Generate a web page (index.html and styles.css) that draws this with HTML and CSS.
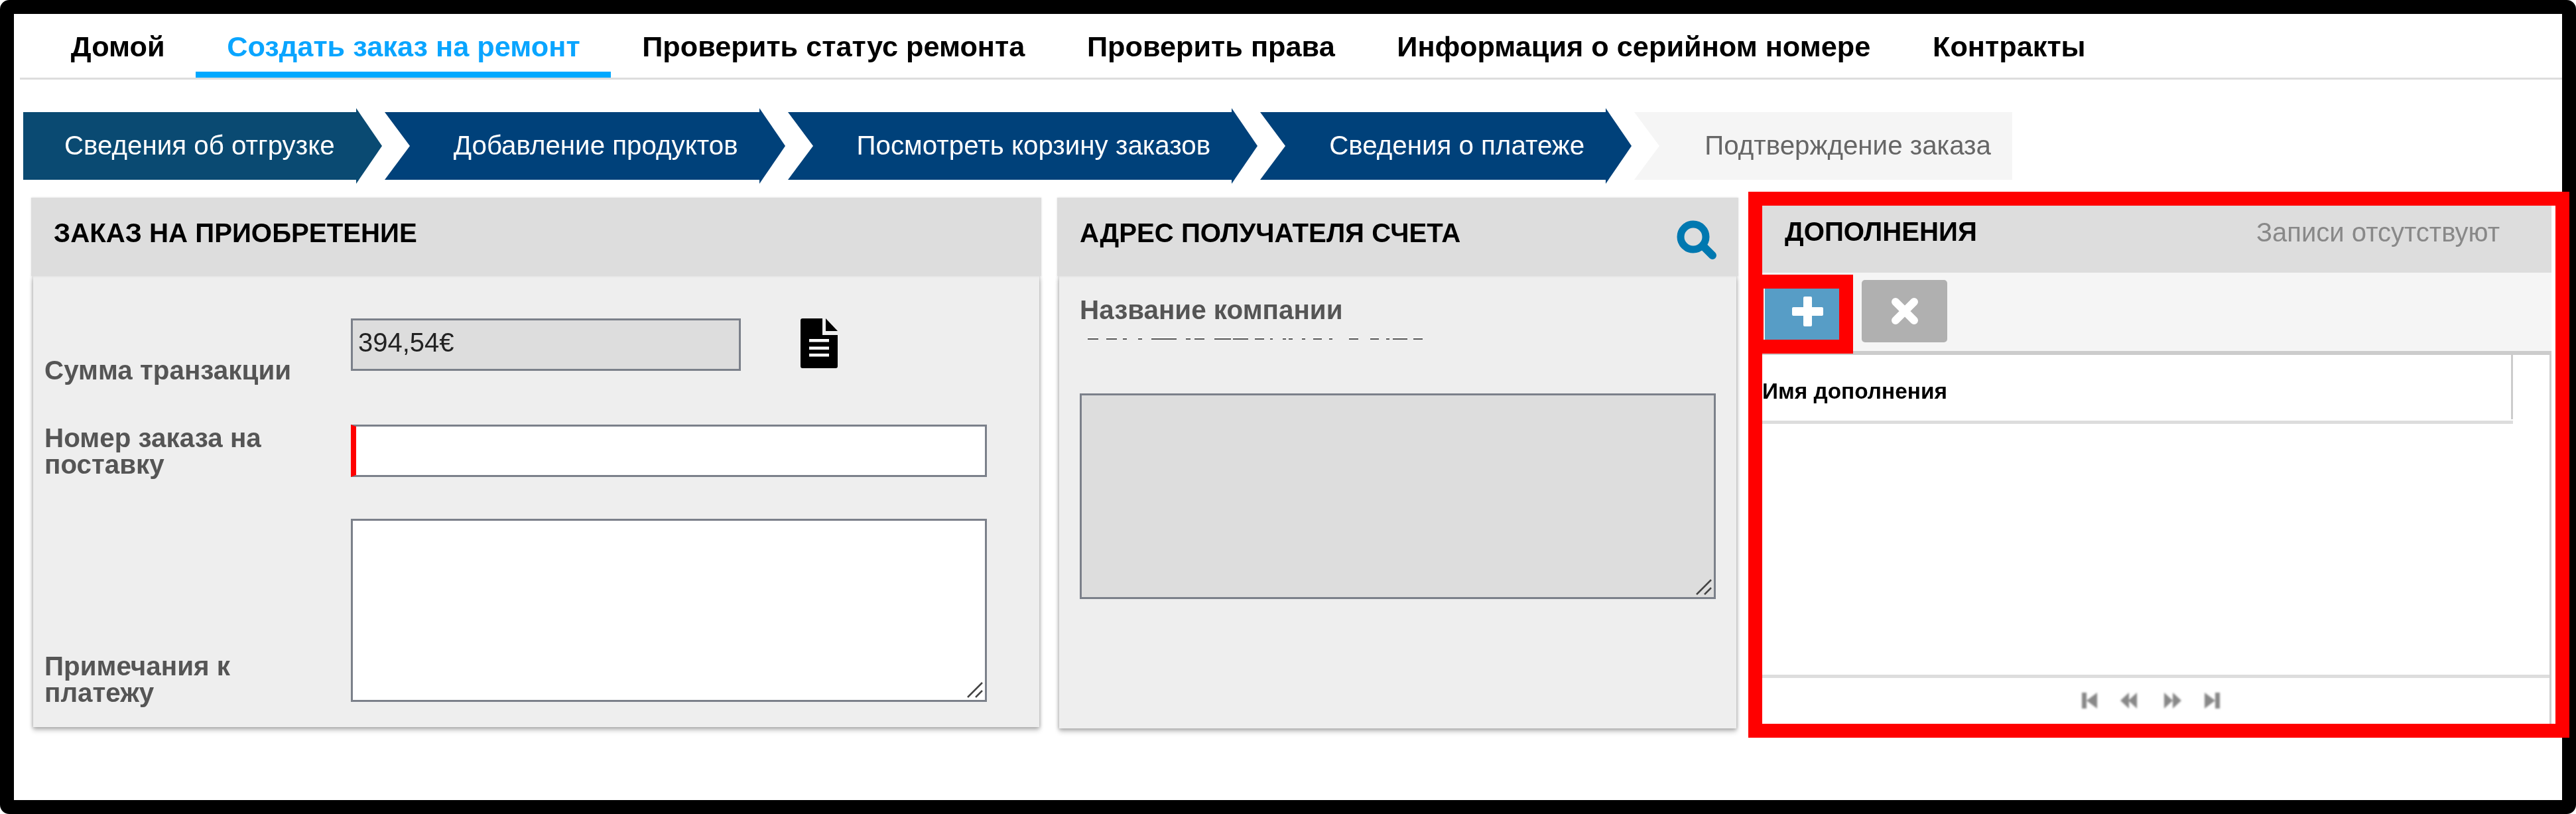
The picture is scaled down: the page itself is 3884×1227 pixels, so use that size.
FILE: index.html
```html
<!DOCTYPE html>
<html lang="ru">
<head>
<meta charset="utf-8">
<title>Создать заказ на ремонт</title>
<link rel="stylesheet" href="styles.css">
</head>
<body>
<div class="frame">
  <nav class="nav">
    <a class="nav-item">Домой</a>
    <a class="nav-item active">Создать заказ на ремонт</a>
    <a class="nav-item">Проверить статус ремонта</a>
    <a class="nav-item">Проверить права</a>
    <a class="nav-item">Информация о серийном номере</a>
    <a class="nav-item">Контракты</a>
  </nav>
  <ol class="steps">
    <li class="step first">Сведения об отгрузке</li>
    <li class="step">Добавление продуктов</li>
    <li class="step">Посмотреть корзину заказов</li>
    <li class="step">Сведения о платеже</li>
    <li class="step pending">Подтверждение заказа</li>
  </ol>
  <div class="panels">
    <section class="panel panel-order">
      <header class="panel-head"><h2 class="panel-title">ЗАКАЗ НА ПРИОБРЕТЕНИЕ</h2></header>
      <div class="panel-body order-body">
        <div class="form-row row-amount">
          <label class="label">Сумма транзакции</label>
          <div class="control with-icon">
            <input class="field amount" type="text" readonly value="394,54€">
            <svg class="doc-icon" viewBox="0 0 56 75" width="56" height="75">
              <path fill="#000" d="M3 0H33V25H56V72a3 3 0 0 1-3 3H3a3 3 0 0 1-3-3V3a3 3 0 0 1 3-3Z"/>
              <path fill="#000" d="M38 0L56 19H38Z"/>
              <path fill="#fff" d="M13 31h30v4.500H13ZM13 42.500h30v4.500H13ZM13 53h30v4.500H13Z"/>
            </svg>
          </div>
        </div>
        <div class="form-row row-po">
          <label class="label">Номер заказа на поставку</label>
          <div class="control"><input class="field po" type="text"></div>
        </div>
        <div class="form-row row-notes">
          <label class="label">Примечания к платежу</label>
          <div class="control notes">
            <textarea class="field area notes-area"></textarea>
            <svg class="grip" viewBox="0 0 24 24" width="24" height="24"><path d="M1 23L23 1M13 23L23 13" stroke="#444" stroke-width="2.500" fill="none"/></svg>
          </div>
        </div>
      </div>
    </section>
    <section class="panel panel-address">
      <header class="panel-head head-search">
        <h2 class="panel-title">АДРЕС ПОЛУЧАТЕЛЯ СЧЕТА</h2>
        <svg class="search-icon" viewBox="0 0 60 60" width="60" height="60">
          <circle cx="25" cy="25" r="19" fill="none" stroke="#0078b0" stroke-width="11"/>
          <path d="M42 41L54 53" stroke="#0078b0" stroke-width="12" stroke-linecap="round"/>
        </svg>
      </header>
      <div class="panel-body address-body">
        <div class="label company">Название компании</div>
        <svg class="masked" viewBox="0 0 530 4" width="530" height="4">
          <path stroke="#fff" stroke-width="2" fill="none" d="M20 1H36M48 1H64M73 1H79M96 1H102M116 1H154M168 1H175M181 1H196M211 1H236M239 1H262M272 1H286M295 1H299M314 1H319M323 1H329M343 1H348M360 1H373M384 1H389M414 1H428M446 1H459M470 1H475M480 1H502M511 1H525"/>
          <path stroke="#555" stroke-width="2" fill="none" d="M20 3H36M48 3H64M73 3H79M96 3H102M116 3H154M168 3H175M181 3H196M211 3H236M239 3H262M272 3H286M295 3H299M314 3H319M323 3H329M343 3H348M360 3H373M384 3H389M414 3H428M446 3H459M470 3H475M480 3H502M511 3H525"/>
        </svg>
        <div class="control notes">
          <textarea class="field area address-area" readonly></textarea>
          <svg class="grip" viewBox="0 0 24 24" width="24" height="24"><path d="M1 23L23 1M13 23L23 13" stroke="#444" stroke-width="2.500" fill="none"/></svg>
        </div>
      </div>
    </section>
    <section class="panel panel-addons">
      <header class="panel-head addons-head">
        <h2 class="panel-title">ДОПОЛНЕНИЯ</h2>
        <span class="empty-note">Записи отсутствуют</span>
      </header>
      <div class="toolbar">
        <button class="tool add" type="button">
          <svg viewBox="0 0 47 45" width="47" height="45"><path fill="#fff" d="M17 2a2 2 0 0 1 2-2h9a2 2 0 0 1 2 2v14h15a2 2 0 0 1 2 2v9a2 2 0 0 1-2 2H30v14a2 2 0 0 1-2 2h-9a2 2 0 0 1-2-2V29H2a2 2 0 0 1-2-2v-9a2 2 0 0 1 2-2h15Z"/></svg>
        </button>
        <button class="tool remove" type="button">
          <svg viewBox="0 0 40 40" width="40" height="40"><path d="M6 6L34 34M34 6L6 34" stroke="#fff" stroke-width="12" stroke-linecap="round"/></svg>
        </button>
      </div>
      <div class="grid">
        <div class="grid-head"><span class="grid-col">Имя дополнения</span></div>
        <div class="grid-rows"></div>
        <div class="grid-foot">
          <svg class="pager" viewBox="0 0 208 24" width="208" height="24">
            <path fill="#888" d="M0 0h7v24H0ZM23 0v24L7 12Z"/>
            <path fill="#888" d="M71 0v24L58 12ZM83 0v24L70 12Z"/>
            <path fill="#888" d="M124 0l13 12-13 12ZM137 0l13 12-13 12Z"/>
            <path fill="#888" d="M185 0l16 12-16 12ZM201 0h7v24h-7Z"/>
          </svg>
        </div>
      </div>
    </section>
  </div>
</div>
<div class="callout callout-panel"></div>
<div class="callout callout-add"></div>
</body>
</html>
```

FILE: styles.css
```css
* { box-sizing: border-box; }
html, body { margin: 0; padding: 0; background: #fff; }
body { width: 3884px; height: 1227px; overflow: hidden; font-family: "Liberation Sans", Arial, sans-serif; }

.frame {
  width: 3884px;
  height: 1227px;
  border: 21px solid #000;
  border-radius: 14px;
  background: #fff;
  overflow: hidden;
  filter: blur(0.6px);
}

.nav {
  display: flex;
  margin-left: 9px;
  padding-left: 30px;
  height: 99px;
  border-bottom: 3px solid #ddd;
}
.nav-item {
  height: 96px;
  padding: 26px 46.800px 15px;
  border-bottom: 9px solid transparent;
  font-size: 43.300px;
  line-height: 46px;
  font-weight: 700;
  color: #000;
  white-space: nowrap;
}
.nav-item.active { color: #0aa5ff; border-bottom-color: #00a8ff; }

.steps {
  display: flex;
  list-style: none;
  margin: 49px 0 0 14px;
  padding: 0;
}
.step {
  position: relative;
  height: 102px;
  margin-right: 43px;
  padding: 0 32px 0 104px;
  background: #00417a;
  color: #fff;
  font-size: 40.300px;
  line-height: 102px;
  white-space: nowrap;
}
.step::before {
  content: "";
  position: absolute;
  left: 0;
  top: 0;
  border-left: 38px solid #fff;
  border-top: 51px solid transparent;
  border-bottom: 51px solid transparent;
}
.step::after {
  content: "";
  position: absolute;
  left: 100%;
  top: -6px;
  border-left: 39px solid #00417a;
  border-top: 57px solid transparent;
  border-bottom: 57px solid transparent;
}
.step.first { background: #0a4a72; padding-left: 62px; }
.step.first::before { display: none; }
.step.first::after { border-left-color: #0a4a72; }
.step.pending { background: #f5f5f5; color: #666; margin-right: 0; padding: 0 32px 0 106px; }
.step.pending::after { display: none; }

.panels {
  display: flex;
  align-items: flex-start;
  gap: 24px;
  margin: 27px 0 0 26px;
}
.panel { flex: none; }
.panel-order { width: 1523px; }
.panel-address { width: 1027px; }
.panel-addons { width: 1197px; margin: 12px 0 0 12px; background: #fff; height: 781px; display: flex; flex-direction: column; }

.panel-head {
  position: relative;
  height: 118px;
  padding: 32px 33px 0 34px;
  background: #ddd;
  box-shadow: 0 0 3px rgba(0, 0, 0, .12);
}
.panel-title { margin: 0; font-size: 40.200px; line-height: 44px; font-weight: 700; color: #000; white-space: nowrap; }
.head-search { display: flex; justify-content: space-between; align-items: flex-start; }
.search-icon { margin-top: 2px; }
.panel-body {
  margin: 0 3px;
  background: #eee;
  box-shadow: 0 0 5px 1px rgba(0, 0, 0, .22), 0 5px 7px rgba(0, 0, 0, .22);
}

.order-body { height: 680px; padding: 64px 77px 32px 17px; }
.form-row {
  display: grid;
  grid-template-columns: 462px 959px;
  align-items: end;
  margin-bottom: 62px;
}
.form-row:last-child { margin-bottom: 0; }
.row-amount { min-height: 98px; }
.row-po { align-items: center; }
.row-notes { min-height: 282px; }
.control { position: relative; align-self: start; }
.with-icon { display: flex; gap: 90px; }

.label { padding-right: 40px; font-size: 40.400px; line-height: 40px; font-weight: 700; color: #555; }
.field {
  display: block;
  margin: 0;
  padding: 0 8px;
  border: 3px solid #7b808a;
  border-radius: 0;
  outline: none;
  background: #fff;
  font-family: "Liberation Sans", Arial, sans-serif;
  font-size: 40px;
  color: #222;
}
.amount { width: 588px; height: 79px; background: #ddd; padding-bottom: 6px; }
.po { width: 959px; height: 79px; border-left: 8px solid #f00; }
.area { width: 959px; resize: none; }
.notes-area { height: 276px; }
.address-area { height: 310px; background: #ddd; }
.doc-icon { flex: none; }
.grip { position: absolute; right: 6px; bottom: 6px; }

.address-body { height: 682px; padding: 31px 31px 0 31px; }
.masked {
  display: block;
  margin: 21px 0 81px -8px;
}

.addons-head {
  display: flex;
  justify-content: space-between;
  width: 1190px;
  height: 101px;
  padding: 18px 78px 0 34px;
  box-shadow: none;
}
.empty-note { font-size: 40px; line-height: 44px; color: #888; white-space: nowrap; }
.toolbar {
  display: flex;
  gap: 18px;
  width: 1190px;
  height: 124px;
  padding: 11px 0 0 4px;
  background: #f5f5f5;
  border-bottom: 6px solid #ccc;
}
.tool {
  display: flex;
  align-items: center;
  justify-content: center;
  width: 129px;
  height: 94px;
  padding: 0;
  border: 0;
  border-radius: 5px;
}
.add { background: #579dc6; }
.remove { background: #b0b0b0; margin-left: -1px; }

.grid {
  flex: 1;
  display: flex;
  flex-direction: column;
  width: 1190px;
  border-right: 3px solid #ccc;
}
.grid-head { height: 104px; width: 1132px; border-bottom: 5px solid #ddd; }
.grid-col {
  display: block;
  height: 97px;
  border-right: 3px solid #ccc;
  font-size: 33.400px;
  font-weight: 700;
  line-height: 110px;
  color: #000;
  white-space: nowrap;
}
.grid-rows { flex: 1; }
.grid-foot {
  display: flex;
  justify-content: center;
  height: 74px;
  padding: 22px 16px 0 0;
  border-top: 5px solid #ddd;
}
.pager { filter: blur(1.500px); }

.callout { position: absolute; border: 21px solid #f00; }
.callout-panel { left: 2636px; top: 289px; width: 1238px; height: 823px; }
.callout-add { left: 2638px; top: 414px; width: 156px; height: 119px; }
```
